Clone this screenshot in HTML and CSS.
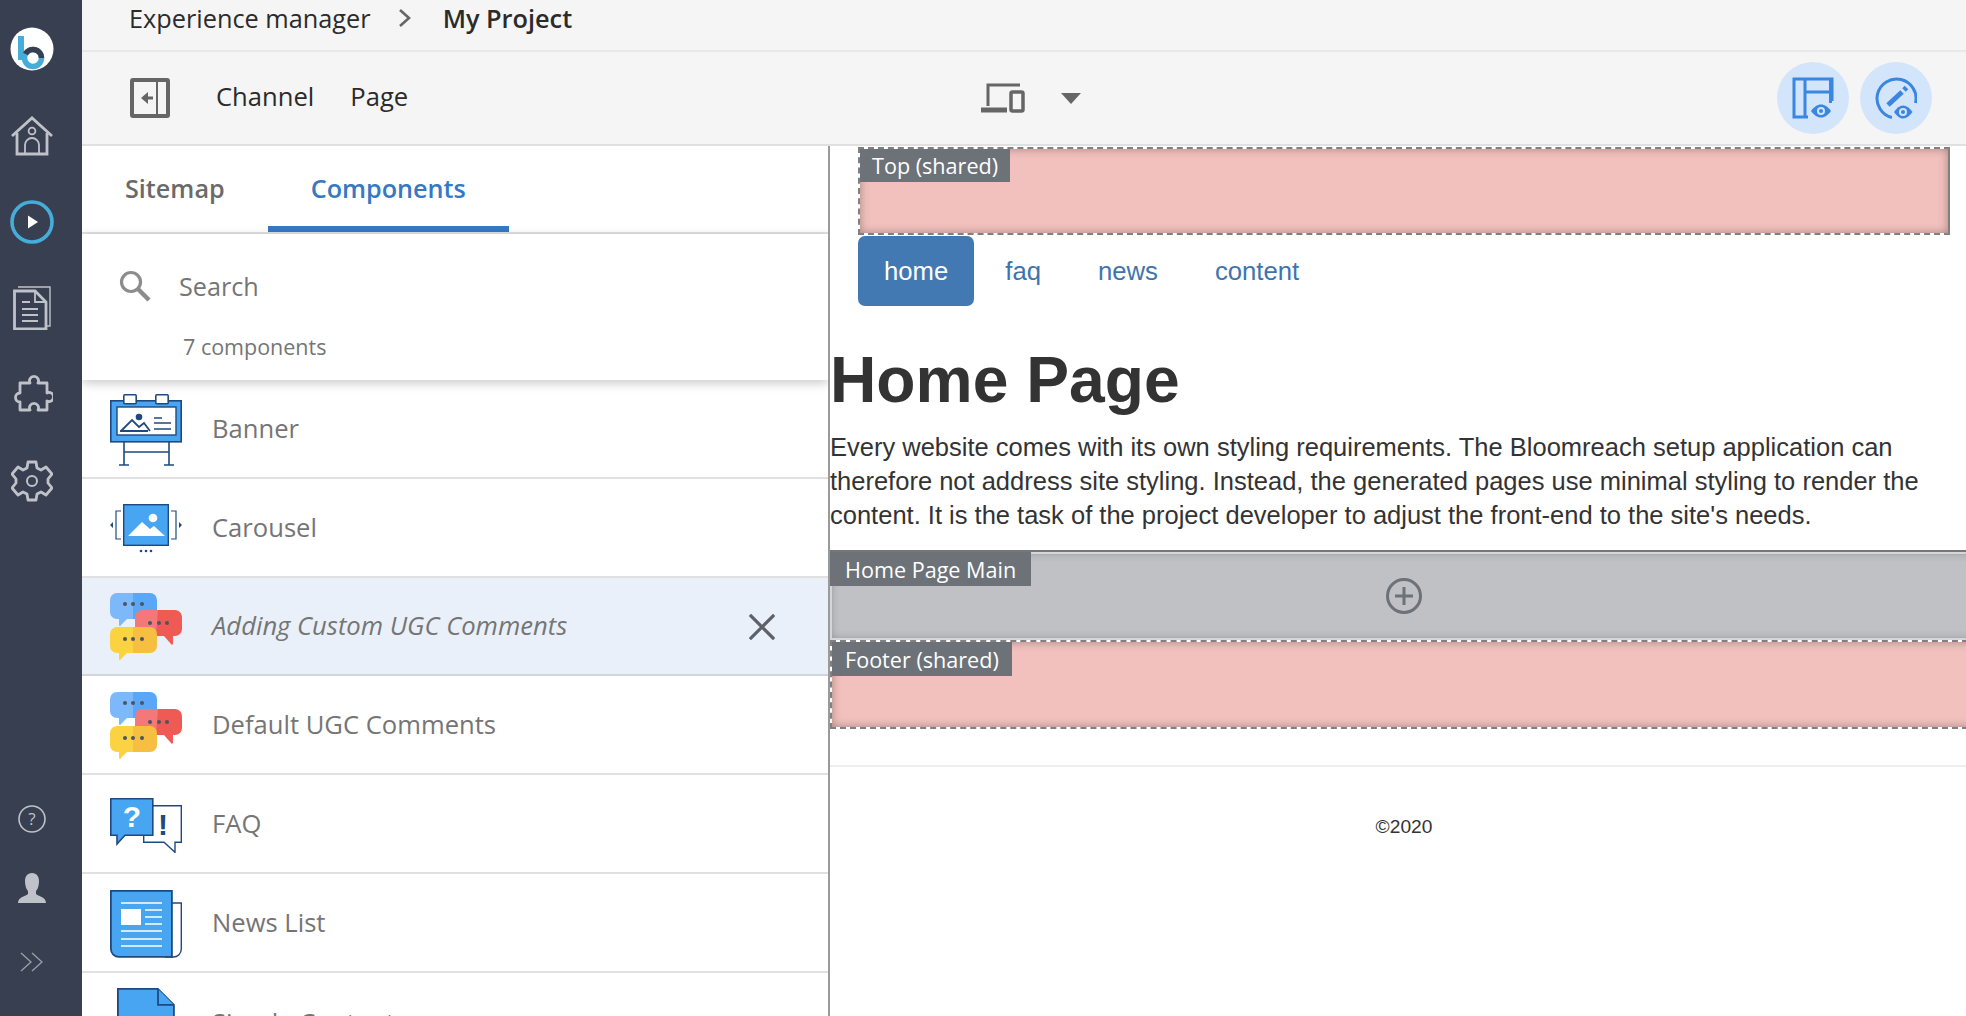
FILE: index.html
```html
<!DOCTYPE html>
<html lang="en">
<head>
    <meta charset="UTF-8">
    <title>Experience manager - My Project</title>
    <link rel="stylesheet" href="styles.css">
</head>
<body>
    <svg class="defs" width="0" height="0">
        <symbol id="chat" viewBox="0 0 72 68">
            <path fill="#5aa7f7" d="M23 0h17a7 7 0 0 1 7 7v12a7 7 0 0 1-7 7H23z"/>
            <path fill="#7db8fb" d="M23 0H7a7 7 0 0 0-7 7v12a7 7 0 0 0 7 7h2v6a1 1 0 0 0 2 0l6-6h6z"/>
            <path fill="#f2787a" d="M48 17H32a7 7 0 0 0-7 7v12a7 7 0 0 0 7 7h16z"/>
            <path fill="#f05a55" d="M48 17h17a7 7 0 0 1 7 7v12a7 7 0 0 1-7 7h-2v7a1 1 0 0 1-2 1l-7-8h-8z"/>
            <path fill="#fbd241" d="M23 34H7a7 7 0 0 0-7 7v12a7 7 0 0 0 7 7h2v6a1 1 0 0 0 2 0l6-6h6z"/>
            <path fill="#f6bf41" d="M23 34h17a7 7 0 0 1 7 7v12a7 7 0 0 1-7 7H23z"/>
            <g fill="#4a5560">
                <circle cx="15" cy="11" r="2"/><circle cx="23" cy="11" r="2"/><circle cx="32" cy="11" r="2"/>
                <circle cx="40" cy="30" r="2"/><circle cx="49" cy="30" r="2"/><circle cx="57" cy="30" r="2"/>
                <circle cx="15" cy="46" r="2"/><circle cx="23" cy="46" r="2"/><circle cx="32" cy="46" r="2"/>
            </g>
        </symbol>
    </svg>

    <aside class="sidebar">
        <div class="side-top">
            <a class="side-item">
                <svg width="44" height="44" viewBox="0 0 44 44">
                    <circle cx="22" cy="22" r="21.5" fill="#fff"/>
                    <path fill="#46acd9" d="M8 9h6v24H8z"/>
                    <circle cx="23" cy="31" r="8.500" fill="none" stroke="#46acd9" stroke-width="5.500"/>
                    <path fill="none" stroke="#373f50" stroke-width="5.500" d="M15.500 27A8.500 8.500 0 0 1 31.500 31"/>
                </svg>
            </a>
            <a class="side-item">
                <svg width="42" height="40" viewBox="0 0 42 40" fill="none" stroke="#bfc2c8" stroke-width="2.800">
                    <path d="M1 20L21 2l20 18"/>
                    <path d="M6 17v21h30V17"/>
                    <circle cx="21" cy="15" r="3.400" stroke-width="1.800"/>
                    <path stroke-width="1.800" d="M14 38V29a7 7 0 0 1 14 0v9"/>
                </svg>
            </a>
            <a class="side-item">
                <svg width="44" height="44" viewBox="0 0 44 44">
                    <circle cx="22" cy="22" r="20" fill="none" stroke="#46acd9" stroke-width="3.600"/>
                    <path fill="#fff" d="M18 15.500l10 6.500-10 6.500z"/>
                </svg>
            </a>
            <a class="side-item">
                <svg width="38" height="44" viewBox="0 0 38 44" fill="none" stroke="#bfc2c8">
                    <path stroke-width="1.400" d="M5 1h32v39h-4"/>
                    <path fill="#373f50" stroke-width="2.800" d="M1.500 5H22l11 11v27H1.500z"/>
                    <path stroke-width="1.800" d="M22 5v11h11M9 16h8M9 23h16M9 29h16M9 35h16"/>
                </svg>
            </a>
            <a class="side-item">
                <svg width="42" height="42" viewBox="0 0 42 42" fill="none" stroke="#bfc2c8" stroke-width="2.800" stroke-linejoin="round">
                    <path d="M15 9h4a4.500 4.500 0 1 1 8 0h9v10a4.500 4.500 0 1 1 0 8v9h-9a4.500 4.500 0 1 0-8 0H9v-8a4.500 4.500 0 1 1 0-9V9z"/>
                </svg>
            </a>
            <a class="side-item">
                <svg width="42" height="42" viewBox="0 0 42 42" fill="none" stroke="#bfc2c8" stroke-width="2.800" stroke-linejoin="round">
                    <path d="M17 2h8l1 6 4 2 5-3 6 7-4 5v4l4 5-6 7-5-3-4 2-1 6h-8l-1-6-4-2-5 3-6-7 4-5v-4L1 14l6-7 5 3 4-2z"/>
                    <circle cx="21" cy="21" r="5" stroke-width="2"/>
                </svg>
            </a>
        </div>
        <div class="side-bottom">
            <a class="side-item small">
                <svg width="28" height="28" viewBox="0 0 28 28">
                    <circle cx="14" cy="14" r="13" fill="none" stroke="#bfc2c8" stroke-width="1.600"/>
                    <text x="14" y="20" text-anchor="middle" class="help-mark">?</text>
                </svg>
            </a>
            <a class="side-item small">
                <svg width="28" height="30" viewBox="0 0 28 30">
                    <path fill="#bfc2c8" d="M14 0c5 0 7 4 7 8 0 4-1 8-3 10v3c2 2 10 3 10 9H0c0-6 8-7 10-9v-3C8 16 7 12 7 8c0-4 2-8 7-8z"/>
                </svg>
            </a>
            <a class="side-item small last">
                <svg width="24" height="20" viewBox="0 0 24 20" fill="none" stroke="#9ba0a9" stroke-width="1.300">
                    <path d="M1 1l10 9-10 9M12 1l10 9-10 9"/>
                </svg>
            </a>
        </div>
    </aside>

    <div class="main">
        <div class="crumbs">
            <span>Experience manager</span>
            <svg class="crumb-sep" width="14" height="20" viewBox="0 0 14 20" fill="none" stroke="#666" stroke-width="2.600">
                <path d="M2 2l9 8-9 8"/>
            </svg>
            <strong>My Project</strong>
        </div>

        <div class="toolbar">
            <div class="tool-left">
                <svg width="40" height="40" viewBox="0 0 40 40" fill="none" stroke="#666">
                    <rect x="2" y="2" width="36" height="36" rx="1" stroke-width="4"/>
                    <path stroke-width="2" d="M27 2v36"/>
                    <path stroke-width="3" d="M23 20H13"/>
                    <path fill="#666" stroke="none" d="M11 20l7-6v12z"/>
                </svg>
                <a class="tool-link first">Channel</a>
                <a class="tool-link">Page</a>
            </div>
            <div class="tool-mid">
                <svg width="44" height="30" viewBox="0 0 44 30" fill="none" stroke="#666">
                    <path stroke-width="3" d="M39 2H7v21"/>
                    <path stroke-width="5" d="M0 27h26"/>
                    <rect x="30" y="9" width="12" height="19" rx="1.500" stroke-width="3.500"/>
                </svg>
                <span class="caret"></span>
            </div>
            <div class="tool-right">
                <span class="round-btn">
                    <svg width="42" height="42" viewBox="0 0 42 42" fill="none" stroke="#3a86e0" stroke-width="3">
                        <path d="M16 40H2V2h38v24"/>
                        <path d="M13 2v38M13 15h27"/>
                        <path fill="#d2e5fa" stroke="none" d="M16 24h26v18H16z"/>
                        <path fill="#3a86e0" stroke="none" d="M19 34c3-4 6-6.500 10-6.500s7 2.500 10 6.500c-3 4-6 6.500-10 6.500s-7-2.500-10-6.500z"/>
                        <circle cx="29" cy="34" r="4" fill="#d2e5fa" stroke="none"/>
                        <circle cx="29" cy="34" r="2" fill="#3a86e0" stroke="none"/>
                        <path d="M38.500 2v24"/>
                    </svg>
                </span>
                <span class="round-btn">
                    <svg width="42" height="42" viewBox="0 0 42 42" fill="none" stroke="#3a86e0" stroke-width="3">
                        <path d="M17 40.500A19.500 19.500 0 1 1 40.500 26"/>
                        <path stroke-width="5" d="M13 28L27 15"/>
                        <path stroke-width="5" d="M29 13l2.500-2.500"/>
                        <path fill="#d2e5fa" stroke="none" d="M17 30c3-4 7-5 11-5s8 1 12 5v12H17z"/>
                        <path fill="#3a86e0" stroke="none" d="M19 35c3-4 5.500-6.500 9-6.500s6.500 2.500 9.500 6.500c-3 4-6 6.500-9.500 6.500s-6-2.500-9-6.500z"/>
                        <circle cx="28" cy="35" r="4" fill="#d2e5fa" stroke="none"/>
                        <circle cx="28" cy="35" r="2" fill="#3a86e0" stroke="none"/>
                    </svg>
                </span>
            </div>
        </div>

        <div class="content">
            <section class="panel">
                <div class="tabs">
                    <a class="tab">Sitemap</a>
                    <a class="tab active">Components</a>
                </div>
                <div class="search">
                    <div class="search-line">
                        <svg width="34" height="34" viewBox="0 0 34 34" fill="none" stroke="#8c8c8c">
                            <circle cx="13" cy="13" r="9.500" stroke-width="3.200"/>
                            <path stroke-width="4.500" d="M20 20l11 11"/>
                        </svg>
                        <span>Search</span>
                    </div>
                    <div class="count">7 components</div>
                </div>
                <div class="rows">
                    <div class="row">
                        <svg class="row-icon" width="72" height="72" viewBox="0 0 72 72">
                            <g fill="none" stroke="#1f4a80" stroke-width="1.600">
                                <path d="M14 48v23M59 48v23M14 58h45M9 71h10M54 71h10"/>
                            </g>
                            <rect x=".8" y="6.800" width="70.400" height="41" fill="#47a5f1" stroke="#1f4a80" stroke-width="1.600"/>
                            <rect x="13.800" y=".8" width="12.400" height="9" rx="1" fill="#fff" stroke="#1f4a80" stroke-width="1.600"/>
                            <rect x="45.800" y=".8" width="12.400" height="9" rx="1" fill="#fff" stroke="#1f4a80" stroke-width="1.600"/>
                            <rect x="7" y="13" width="59" height="28" fill="#fff" stroke="#1f4a80" stroke-width="1.400"/>
                            <circle cx="29" cy="23" r="3.300" fill="#1f4a80"/>
                            <path fill="none" stroke="#1f4a80" stroke-width="1.800" d="M11 37l11-11 7 7 5-4 6 8M10 37h28"/>
                            <path fill="none" stroke="#1f4a80" stroke-width="1.600" d="M44 24h8M44 29h17M44 35h17"/>
                        </svg>
                        <span class="row-name">Banner</span>
                    </div>
                    <div class="row">
                        <svg class="row-icon" width="72" height="50" viewBox="0 0 72 50">
                            <rect x="13.700" y=".7" width="44.600" height="40.600" fill="#47a5f1" stroke="#1f4a80" stroke-width="1.400"/>
                            <circle cx="43" cy="14" r="4.300" fill="#fff"/>
                            <path fill="#fff" d="M18 32l14-14 8 7 4-3 11 10z"/>
                            <path fill="none" stroke="#1f4a80" stroke-width="1.200" d="M11 7H6v28h5M61 7h5v28h-5"/>
                            <path fill="#1f4a80" d="M3 18v6l-3-3zM69 18v6l3-3z"/>
                            <g fill="#1f4a80"><circle cx="31" cy="47" r="1.300"/><circle cx="36" cy="47" r="1.300"/><circle cx="41" cy="47" r="1.300"/></g>
                        </svg>
                        <span class="row-name">Carousel</span>
                    </div>
                    <div class="row selected">
                        <svg class="row-icon" width="72" height="68"><use href="#chat"/></svg>
                        <span class="row-name">Adding Custom UGC Comments</span>
                        <svg class="row-close" width="26" height="26" viewBox="0 0 26 26" fill="none" stroke="#5e6268" stroke-width="3.200" stroke-linecap="square">
                            <path d="M2 2l22 22M24 2L2 24"/>
                        </svg>
                    </div>
                    <div class="row">
                        <svg class="row-icon" width="72" height="68"><use href="#chat"/></svg>
                        <span class="row-name">Default UGC Comments</span>
                    </div>
                    <div class="row">
                        <svg class="row-icon" width="72" height="55" viewBox="0 0 72 55">
                            <path fill="#fff" stroke="#1f4a80" stroke-width="1.400" d="M34 7.700h37.300v36.600H65v10l-11-10H33.700v-8"/>
                            <path fill="#47a5f1" stroke="#1f4a80" stroke-width="1.600" d="M.8.800h42v36.400H15L7 46v-8.800H.8z"/>
                            <text x="22" y="29" text-anchor="middle" class="faq-q">?</text>
                            <text x="53" y="37" text-anchor="middle" class="faq-x">!</text>
                        </svg>
                        <span class="row-name">FAQ</span>
                    </div>
                    <div class="row">
                        <svg class="row-icon" width="72" height="68" viewBox="0 0 72 68">
                            <path fill="#fff" stroke="#1f4a80" stroke-width="1.400" d="M60 13h11.300v46a8 8 0 0 1-8 8H55"/>
                            <path fill="#47a5f1" stroke="#1f4a80" stroke-width="1.800" d="M.9.900h61v66H8.900a8 8 0 0 1-8-8z"/>
                            <rect x="11" y="19" width="20" height="16" fill="#fff"/>
                            <path fill="none" stroke="#fff" stroke-width="1.700" d="M11 13h41M35 20h17M35 27h17M35 34h17M11 41h41M11 49h41M11 56h41"/>
                        </svg>
                        <span class="row-name">News List</span>
                    </div>
                    <div class="row tall">
                        <svg class="row-icon doc" width="58" height="72" viewBox="0 0 58 72">
                            <path fill="#47a5f1" stroke="#1f4a80" stroke-width="1.800" d="M.9.900h40l16 16v54H.9z"/>
                            <path fill="#47a5f1" stroke="#1f4a80" stroke-width="1.800" d="M41 .9v16h16"/>
                        </svg>
                        <span class="row-name">Simple Content</span>
                    </div>
                </div>
            </section>

            <section class="site">
                <div class="site-head">
                    <div class="box shared top-box">
                        <span class="box-label">Top (shared)</span>
                    </div>
                    <ul class="pills">
                        <li class="pill active">home</li>
                        <li class="pill">faq</li>
                        <li class="pill">news</li>
                        <li class="pill">content</li>
                    </ul>
                </div>
                <h1>Home Page</h1>
                <p>Every website comes with its own styling requirements. The Bloomreach setup application can therefore not address site styling. Instead, the generated pages use minimal styling to render the content. It is the task of the project developer to adjust the front-end to the site's needs.</p>
                <div class="box main-box">
                    <span class="box-label main-label">Home Page Main</span>
                    <svg width="36" height="36" viewBox="0 0 36 36" fill="none" stroke="#6c7278">
                        <circle cx="18" cy="18" r="16.500" stroke-width="3"/>
                        <path stroke-width="3" d="M18 9v18M9 18h18"/>
                    </svg>
                </div>
                <div class="box shared footer-box">
                    <span class="box-label foot-label">Footer (shared)</span>
                </div>
                <footer class="site-foot">©2020</footer>
            </section>
        </div>
    </div>
</body>
</html>
```

FILE: styles.css
```css
* {
    box-sizing: border-box;
}
html, body {
    height: 100%;
}
body {
    margin: 0;
    display: flex;
    height: 100vh;
    overflow: hidden;
    background-color: white;
    font-family: "Open Sans", sans-serif;
    color: #2b2b2b;
}
.defs {
    display: block;
    height: 0;
    width: 0;
    flex: none;
}

/* left icon bar */
.sidebar {
    width: 82px;
    flex: none;
    background-color: #373f50;
    display: flex;
    flex-direction: column;
    justify-content: space-between;
    padding-right: 18px;
}
.side-top {
    padding-top: 6px;
}
.side-item {
    display: flex;
    align-items: center;
    justify-content: center;
    height: 86.4px;
}
.side-item.small {
    height: 69px;
}
.side-item.last {
    height: 68px;
    margin-top: 6px;
}
.side-bottom {
    padding-bottom: 20px;
}
.help-mark {
    font-family: "Open Sans", sans-serif;
    font-size: 17px;
    fill: #bfc2c8;
}

.main {
    flex: 1;
    min-width: 0;
    display: flex;
    flex-direction: column;
}

/* top bars */
.crumbs {
    height: 52px;
    flex: none;
    display: flex;
    align-items: center;
    padding: 0 0 14px 47px;
    background-color: #f5f5f5;
    border-bottom: 2px solid #e8e8e8;
    font-size: 25.3px;
}
.crumb-sep {
    margin: 0 31px 0 27px;
}
.crumbs strong {
    font-weight: 600;
}
.toolbar {
    height: 94px;
    flex: none;
    display: grid;
    grid-template-columns: 1fr auto 1fr;
    align-items: center;
    padding: 0 34px 0 48px;
    background-color: #f5f5f5;
    border-bottom: 2px solid #e0e0e0;
}
.tool-left {
    display: flex;
    align-items: center;
}
.tool-link {
    font-size: 25.6px;
    margin-left: 36px;
    margin-bottom: 4px;
}
.tool-link.first {
    margin-left: 46px;
}
.tool-mid {
    display: flex;
    align-items: center;
    gap: 36px;
}
.caret {
    width: 0;
    height: 0;
    border-left: 10px solid transparent;
    border-right: 10px solid transparent;
    border-top: 11px solid #666;
}
.tool-right {
    display: flex;
    justify-content: flex-end;
    gap: 11px;
}
.round-btn {
    width: 72px;
    height: 72px;
    border-radius: 50%;
    background-color: #d2e5fa;
    display: flex;
    align-items: center;
    justify-content: center;
}

.content {
    flex: 1;
    min-height: 0;
    display: flex;
}

/* components panel */
.panel {
    width: 748px;
    flex: none;
    border-right: 2px solid #9a9a9a;
    display: flex;
    flex-direction: column;
    overflow: hidden;
}
.tabs {
    height: 88px;
    flex: none;
    display: flex;
    border-bottom: 2px solid #e0e0e0;
}
.tab {
    display: flex;
    align-items: center;
    height: 86px;
    padding: 4px 43px 0;
    font-size: 25.2px;
    font-weight: 600;
    color: #6a6a6a;
    border-bottom: 6px solid transparent;
}
.tab.active {
    color: #3678c3;
    border-bottom-color: #3678c3;
}
.search {
    height: 146px;
    flex: none;
    position: relative;
    z-index: 1;
    background-color: white;
    box-shadow: 0 3px 10px rgba(0, 0, 0, 0.22);
    padding: 35px 0 0 36px;
}
.search-line {
    display: flex;
    align-items: center;
    gap: 27px;
    font-size: 25.2px;
    color: #757575;
}
.count {
    margin: 29px 0 0 65px;
    font-size: 21.5px;
    color: #757575;
}
.row {
    height: 98.8px;
    display: flex;
    align-items: center;
    padding-left: 28px;
    border-bottom: 2px solid #e0e0e0;
    font-size: 25.6px;
    color: #757575;
}
.row.selected {
    background-color: #e9f0f9;
    border-bottom-color: #d2d6de;
    font-style: italic;
}
.row.tall {
    height: 100px;
    border-bottom: none;
}
.row-icon {
    flex: none;
    margin-top: 3px;
}
.row-icon.doc {
    margin: 15px 7px 0;
    align-self: flex-start;
}
.row-name {
    margin-left: 30px;
    flex: 1;
}
.row-close {
    margin: 2px 53px 0 0;
}
.faq-q {
    font-family: "Liberation Sans", sans-serif;
    font-weight: bold;
    font-size: 30px;
    fill: white;
}
.faq-x {
    font-family: "Liberation Sans", sans-serif;
    font-weight: bold;
    font-size: 30px;
    fill: #1f4a80;
}

/* site preview */
.site {
    flex: 1;
    min-width: 0;
    margin-right: -12px;
    font-family: "Liberation Sans", sans-serif;
    font-size: 25.5px;
    line-height: 33.9px;
    color: #333;
}
.site-head {
    padding: 1px 28px 0 28px;
}
.box {
    position: relative;
    background-color: #f2c1bd;
    background-clip: padding-box;
    box-shadow: inset 0 0 10px rgba(0, 0, 0, 0.32);
}
.shared {
    border: 2px dashed #808080;
}
.top-box {
    height: 88px;
    border-right: 2px solid #808080;
}
.box-label {
    position: absolute;
    left: 0;
    top: 0;
    background-color: #6c7278;
    color: white;
    font-family: "Open Sans", sans-serif;
    font-size: 21.6px;
    line-height: 33px;
    padding: 0 12px;
    white-space: nowrap;
}
.box-label.main-label {
    padding: 1px 15px 0;
}
.box-label.foot-label {
    padding: 1px 13px 0;
}
.pills {
    list-style: none;
    margin: 1px 0 0;
    padding: 0;
    display: flex;
    gap: 5px;
    height: 70px;
    font-size: 25.7px;
}
.pill {
    padding: 0 26px;
    line-height: 70px;
    color: #3e74ad;
    border-radius: 7px;
}
.pill.active {
    background-color: #4379b2;
    color: white;
}
h1 {
    margin: 40px 0 17px;
    font-size: 64.2px;
    line-height: 68px;
    font-weight: bold;
}
p {
    margin: 0 0 17px;
}
.main-box {
    height: 90px;
    background-color: #bfc1c5;
    border-top: 2px solid #777;
    box-shadow: inset 0 0 0 2px #d4d6d9, inset 0 0 10px rgba(0, 0, 0, 0.32);
    display: flex;
    align-items: center;
    justify-content: center;
}
.footer-box {
    height: 89px;
}
.site-foot {
    margin-top: 36px;
    padding-top: 43px;
    border-top: 2px solid #eee;
    text-align: center;
    font-size: 19.2px;
    color: #333;
}
```
